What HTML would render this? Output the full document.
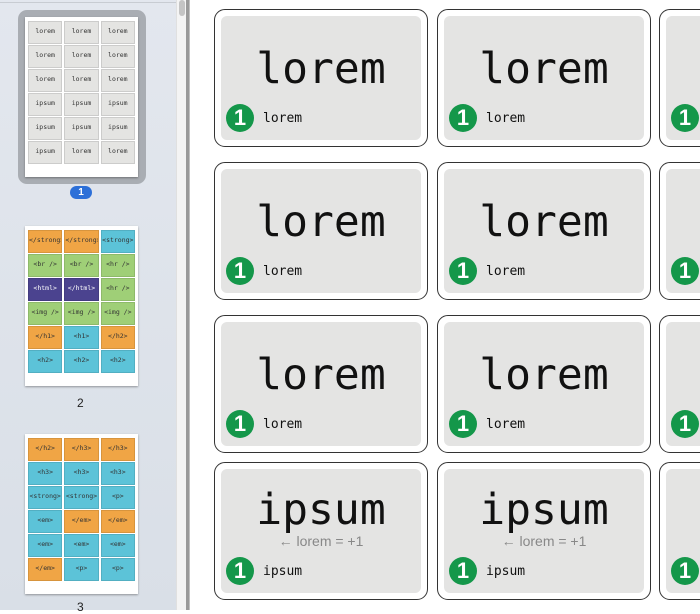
<!DOCTYPE html>
<html><head><style>
*{margin:0;padding:0;box-sizing:border-box}
body{width:700px;height:610px;overflow:hidden;position:relative;background:#fff;font-family:"DejaVu Sans Mono","Liberation Mono",monospace}
#side{position:absolute;left:0;top:0;width:176px;height:610px;background:linear-gradient(#e3e7ee,#d9dfe7)}
#side .topline{position:absolute;left:0;top:2px;width:176px;height:1px;background:#c8ccd2}
#sb{position:absolute;left:176px;top:0;width:10px;height:610px;background:#f4f4f4;border-left:1px solid #e0e0e0}
#sb i{position:absolute;left:2px;top:0;width:6px;height:16px;border-radius:3px;background:#c4c4c4}
#div{position:absolute;left:186px;top:0;width:4px;height:610px;background:#9a9a9a;border-right:1px solid #c0c0c0}
.frame{position:absolute;left:18px;top:10px;width:128px;height:174px;border-radius:9px;background:#a9adb3}
.page{position:absolute;width:113px;height:160px;background:#fff;box-shadow:0 1px 2px rgba(0,0,0,.35);padding:4px 3px;display:grid;grid-template-columns:repeat(3,minmax(0,1fr));grid-auto-rows:23px;gap:1px 2px;align-content:start}
.page div{font-size:6.5px;text-align:center;padding-top:5px;color:#333;border:1px solid rgba(0,0,0,.1);overflow:hidden;white-space:nowrap;min-width:0}
.g{background:#e4e4e2}.o{background:#f0a545}.b{background:#5cc3d8}.n{background:#9fcf77}.p{background:#4b438f;color:#fff!important}
.lbl{position:absolute;font-family:"Liberation Sans",sans-serif;font-size:12px;color:#222}
.badge{position:absolute;left:70px;top:186px;width:22px;height:13px;border-radius:7px;background:#2c6fd8;color:#fff;font:bold 10px "Liberation Sans",sans-serif;text-align:center;line-height:13px}
.card{position:absolute;width:214px;height:138px;border:1.5px solid #333;border-radius:11px;background:#fff}
.in{position:absolute;left:6px;top:6px;right:6px;bottom:6px;border-radius:6px;background:#e4e4e3}
.big{position:absolute;left:0;right:0;top:32px;text-align:center;font-size:43px;color:#111;line-height:1}
.sub{position:absolute;left:0;right:0;top:64px;text-align:center;font-size:14px;color:#888;font-family:"Liberation Sans",sans-serif}
.num{position:absolute;left:5px;bottom:8px;width:28px;height:28px;border-radius:50%;background:#14974a;color:#fff;font:bold 22px "Liberation Sans",sans-serif;text-align:center;line-height:28px}
.sm{position:absolute;left:42px;bottom:14px;font-size:13px;color:#111}
</style></head><body>
<div id="side"><div class="topline"></div>
<div class="frame"></div>
<div class="page" style="left:25px;top:17px">
<div class="g">lorem</div><div class="g">lorem</div><div class="g">lorem</div>
<div class="g">lorem</div><div class="g">lorem</div><div class="g">lorem</div>
<div class="g">lorem</div><div class="g">lorem</div><div class="g">lorem</div>
<div class="g">ipsum</div><div class="g">ipsum</div><div class="g">ipsum</div>
<div class="g">ipsum</div><div class="g">ipsum</div><div class="g">ipsum</div>
<div class="g">ipsum</div><div class="g">lorem</div><div class="g">lorem</div>
</div>
<div class="badge">1</div>
<div class="page" style="left:25px;top:226px">
<div class="o">&lt;/strong&gt;</div><div class="o">&lt;/strong&gt;</div><div class="b">&lt;strong&gt;</div>
<div class="n">&lt;br /&gt;</div><div class="n">&lt;br /&gt;</div><div class="n">&lt;hr /&gt;</div>
<div class="p">&lt;html&gt;</div><div class="p">&lt;/html&gt;</div><div class="n">&lt;hr /&gt;</div>
<div class="n">&lt;img /&gt;</div><div class="n">&lt;img /&gt;</div><div class="n">&lt;img /&gt;</div>
<div class="o">&lt;/h1&gt;</div><div class="b">&lt;h1&gt;</div><div class="o">&lt;/h2&gt;</div>
<div class="b">&lt;h2&gt;</div><div class="b">&lt;h2&gt;</div><div class="b">&lt;h2&gt;</div>
</div>
<div class="lbl" style="left:77px;top:396px">2</div>
<div class="page" style="left:25px;top:434px">
<div class="o">&lt;/h2&gt;</div><div class="o">&lt;/h3&gt;</div><div class="o">&lt;/h3&gt;</div>
<div class="b">&lt;h3&gt;</div><div class="b">&lt;h3&gt;</div><div class="b">&lt;h3&gt;</div>
<div class="b">&lt;strong&gt;</div><div class="b">&lt;strong&gt;</div><div class="b">&lt;p&gt;</div>
<div class="b">&lt;em&gt;</div><div class="o">&lt;/em&gt;</div><div class="o">&lt;/em&gt;</div>
<div class="b">&lt;em&gt;</div><div class="b">&lt;em&gt;</div><div class="b">&lt;em&gt;</div>
<div class="o">&lt;/em&gt;</div><div class="b">&lt;p&gt;</div><div class="b">&lt;p&gt;</div>
</div>
<div class="lbl" style="left:77px;top:600px">3</div>
</div>
<div id="sb"><i></i></div>
<div id="div"></div>

<div class="card" style="left:214px;top:9px"><div class="in"><div class="big">lorem</div><div class="num">1</div><div class="sm">lorem</div></div></div>
<div class="card" style="left:437px;top:9px"><div class="in"><div class="big">lorem</div><div class="num">1</div><div class="sm">lorem</div></div></div>
<div class="card" style="left:659px;top:9px"><div class="in"><div class="num">1</div></div></div>

<div class="card" style="left:214px;top:162px"><div class="in"><div class="big">lorem</div><div class="num">1</div><div class="sm">lorem</div></div></div>
<div class="card" style="left:437px;top:162px"><div class="in"><div class="big">lorem</div><div class="num">1</div><div class="sm">lorem</div></div></div>
<div class="card" style="left:659px;top:162px"><div class="in"><div class="num">1</div></div></div>

<div class="card" style="left:214px;top:315px"><div class="in"><div class="big">lorem</div><div class="num">1</div><div class="sm">lorem</div></div></div>
<div class="card" style="left:437px;top:315px"><div class="in"><div class="big">lorem</div><div class="num">1</div><div class="sm">lorem</div></div></div>
<div class="card" style="left:659px;top:315px"><div class="in"><div class="num">1</div></div></div>

<div class="card" style="left:214px;top:462px"><div class="in"><div class="big" style="top:20px">ipsum</div><div class="sub">← lorem = +1</div><div class="num">1</div><div class="sm">ipsum</div></div></div>
<div class="card" style="left:437px;top:462px"><div class="in"><div class="big" style="top:20px">ipsum</div><div class="sub">← lorem = +1</div><div class="num">1</div><div class="sm">ipsum</div></div></div>
<div class="card" style="left:659px;top:462px"><div class="in"><div class="num">1</div></div></div>
</body></html>
